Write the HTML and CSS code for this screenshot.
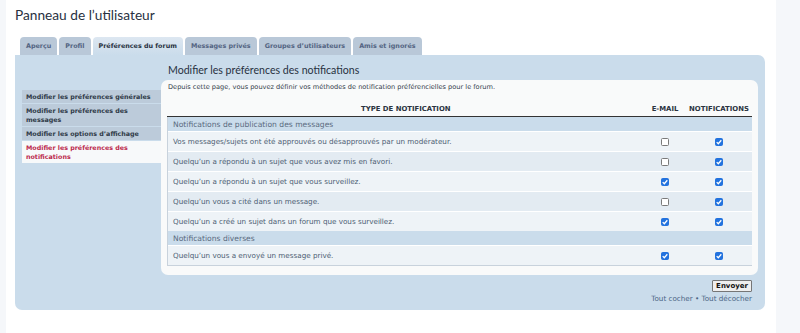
FILE: index.html
```html
<!DOCTYPE html>
<html lang="fr">
<head>
<meta charset="utf-8">
<title>Panneau de l’utilisateur</title>
<link rel="stylesheet" href="styles.css">
</head>
<body>
<div class="wrap">
  <h1 class="page-title">Panneau de l’utilisateur</h1>
  <ul class="tabs">
    <li class="tab">Aperçu</li>
    <li class="tab">Profil</li>
    <li class="tab active">Préférences du forum</li>
    <li class="tab">Messages privés</li>
    <li class="tab">Groupes d’utilisateurs</li>
    <li class="tab">Amis et ignorés</li>
  </ul>
  <div class="panel">
    <ul class="menu">
      <li class="menu-item">Modifier les préférences générales</li>
      <li class="menu-item">Modifier les préférences des messages</li>
      <li class="menu-item">Modifier les options d’affichage</li>
      <li class="menu-item current">Modifier les préférences des notifications</li>
    </ul>
    <div class="main">
      <h2 class="main-title">Modifier les préférences des notifications</h2>
      <div class="box">
        <p class="intro">Depuis cette page, vous pouvez définir vos méthodes de notification préférencielles pour le forum.</p>
        <table class="notif">
          <thead>
            <tr>
              <th class="col-type">Type de notification</th>
              <th class="col-mail">E-mail</th>
              <th class="col-notif">Notifications</th>
            </tr>
          </thead>
          <tbody>
            <tr class="sect"><td colspan="3">Notifications de publication des messages</td></tr>
            <tr class="row bg1">
              <td>Vos messages/sujets ont été approuvés ou désapprouvés par un modérateur.</td>
              <td class="c"><span class="cb"></span></td>
              <td class="c"><span class="cb on"><svg viewBox="0 0 8 8"><path d="M1.7 4.1 3.3 5.7 6.3 2.3"/></svg></span></td>
            </tr>
            <tr class="row bg2">
              <td>Quelqu’un a répondu à un sujet que vous avez mis en favori.</td>
              <td class="c"><span class="cb"></span></td>
              <td class="c"><span class="cb on"><svg viewBox="0 0 8 8"><path d="M1.7 4.1 3.3 5.7 6.3 2.3"/></svg></span></td>
            </tr>
            <tr class="row bg1">
              <td>Quelqu’un a répondu à un sujet que vous surveillez.</td>
              <td class="c"><span class="cb on"><svg viewBox="0 0 8 8"><path d="M1.7 4.1 3.3 5.7 6.3 2.3"/></svg></span></td>
              <td class="c"><span class="cb on"><svg viewBox="0 0 8 8"><path d="M1.7 4.1 3.3 5.7 6.3 2.3"/></svg></span></td>
            </tr>
            <tr class="row bg2">
              <td>Quelqu’un vous a cité dans un message.</td>
              <td class="c"><span class="cb"></span></td>
              <td class="c"><span class="cb on"><svg viewBox="0 0 8 8"><path d="M1.7 4.1 3.3 5.7 6.3 2.3"/></svg></span></td>
            </tr>
            <tr class="row bg1">
              <td>Quelqu’un a créé un sujet dans un forum que vous surveillez.</td>
              <td class="c"><span class="cb on"><svg viewBox="0 0 8 8"><path d="M1.7 4.1 3.3 5.7 6.3 2.3"/></svg></span></td>
              <td class="c"><span class="cb on"><svg viewBox="0 0 8 8"><path d="M1.7 4.1 3.3 5.7 6.3 2.3"/></svg></span></td>
            </tr>
            <tr class="sect"><td colspan="3">Notifications diverses</td></tr>
            <tr class="row bg1">
              <td>Quelqu’un vous a envoyé un message privé.</td>
              <td class="c"><span class="cb on"><svg viewBox="0 0 8 8"><path d="M1.7 4.1 3.3 5.7 6.3 2.3"/></svg></span></td>
              <td class="c"><span class="cb on"><svg viewBox="0 0 8 8"><path d="M1.7 4.1 3.3 5.7 6.3 2.3"/></svg></span></td>
            </tr>
          </tbody>
        </table>
      </div>
      <div class="actions">
        <button class="btn" type="button">Envoyer</button>
        <div class="links"><a href="#">Tout cocher</a> • <a href="#">Tout décocher</a></div>
      </div>
    </div>
  </div>
</div>
</body>
</html>
```
FILE: styles.css
```css
html, body {
  margin: 0;
  padding: 0;
}
body {
  background: #f5f7fa;
  font-family: "DejaVu Sans", Verdana, sans-serif;
  color: #4c5a6c;
}
.wrap {
  margin-left: 6px;
  width: 770px;
  height: 333px;
  background: #ffffff;
  box-sizing: border-box;
  padding: 0 11px 0 9px;
}
.page-title {
  margin: 0;
  padding-top: 6px;
  font-family: Lato, "Open Sans", sans-serif;
  font-weight: 400;
  font-size: 13.7px;
  line-height: 18px;
  color: #28313f;
}
.tabs {
  list-style: none;
  margin: 13px 0 0 5px;
  padding: 0;
  display: flex;
  gap: 2px;
  height: 18px;
}
.tab {
  background: #b9c8d8;
  border-radius: 4px 4px 0 0;
  padding: 0 6px;
  font-weight: bold;
  font-size: 6.4px;
  line-height: 18px;
  color: #536482;
}
.tab.active {
  background: linear-gradient(#dde7f1, #cadceb);
  color: #28313f;
  padding: 0 6px;
}
.panel {
  background: #cadceb;
  border-radius: 0 7px 7px 7px;
  display: grid;
  grid-template-columns: 139px 1fr;
  padding: 8px 7px 6px 7px;
}
.menu {
  list-style: none;
  margin: 27px 0 0 0;
  padding: 0;
  display: flex;
  flex-direction: column;
  gap: 1px;
}
.menu-item {
  background: #bccbda;
  padding: 2px 4px;
  font-weight: bold;
  font-size: 6.35px;
  line-height: 9px;
  color: #2f3a48;
}
.menu-item.current {
  background: #f7f9fa;
  color: #bc2a4d;
}
.main {
  min-width: 0;
}
.main-title {
  margin: 0 0 3px 7px;
  font-family: Lato, "Open Sans", sans-serif;
  font-weight: 400;
  font-size: 10.6px;
  line-height: 14px;
  color: #28313f;
}
.box {
  background: #f9fafa;
  border-radius: 7px;
  padding: 3px 6px 9px 6px;
}
.intro {
  margin: 0 0 9px 1px;
  font-size: 6.6px;
  line-height: 9px;
  color: #333d4a;
}
.notif {
  width: 100%;
  border-collapse: collapse;
  font-size: 7.2px;
}
.notif th {
  font-weight: bold;
  font-size: 6.9px;
  text-transform: uppercase;
  color: #2b3340;
  height: 15px;
  padding: 0;
  border-bottom: 1px solid #333;
  text-align: center;
}
.col-mail { width: 42px; }
.col-notif { width: 66px; }
.notif td {
  padding: 0 0 0 5px;
  color: #4c5d73;
}
.notif td.c {
  padding: 0;
  text-align: center;
}
.sect td {
  background: #cadceb;
  height: 14px;
  font-size: 7.6px;
  color: #5a6b80;
}
.row td {
  height: 19px;
  border-top: 1px solid #ffffff;
}
.notif tbody tr:last-child td {
  border-bottom: 1px solid #c8d2dc;
}
.notif tbody td:first-child {
  border-left: 1px solid #c8d2dc;
}
.bg1 td { background: #eef3f7; }
.bg2 td { background: #e3ebf2; }
.cb {
  display: inline-block;
  box-sizing: border-box;
  width: 8px;
  height: 8px;
  border: 1px solid #7a7a7a;
  border-radius: 1.5px;
  background: #ffffff;
  vertical-align: middle;
  position: relative;
}
.cb.on {
  background: #2272de;
  border-color: #2272de;
}
.cb svg {
  position: absolute;
  left: -1px;
  top: -1px;
  width: 8px;
  height: 8px;
  fill: none;
  stroke: #ffffff;
  stroke-width: 1.3;
}
.actions {
  display: flex;
  flex-direction: column;
  align-items: flex-end;
  padding: 5px 6px 0 0;
}
.btn {
  font-family: "DejaVu Sans", Verdana, sans-serif;
  font-weight: bold;
  font-size: 7px;
  line-height: 10px;
  height: 12px;
  padding: 0 3px;
  margin: 0;
  background: #efefef;
  border: 1px solid #767676;
  border-radius: 1px;
  color: #111;
}
.links {
  margin-top: 2px;
  font-size: 7.2px;
  line-height: 10px;
  color: #4a6585;
}
.links a {
  color: #4a6585;
  text-decoration: none;
}
```
